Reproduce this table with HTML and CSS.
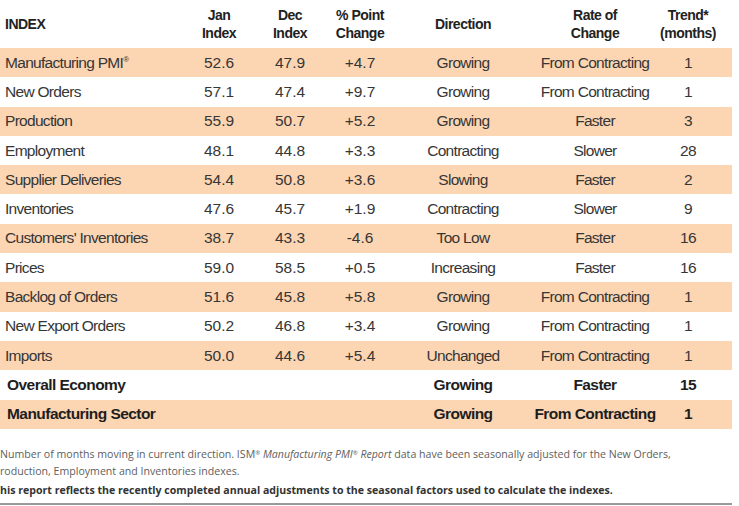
FILE: index.html
```html
<!DOCTYPE html>
<html lang="en">
<head>
<meta charset="utf-8">
<title>ISM Manufacturing Index Summary</title>
<link rel="stylesheet" href="styles.css">
</head>
<body>
<div class="page">
  <table class="ism">
    <colgroup>
      <col class="c-name"><col class="c-jan"><col class="c-dec"><col class="c-chg"><col class="c-dir"><col class="c-rate"><col class="c-trend">
    </colgroup>
    <thead>
      <tr>
        <th class="name">INDEX</th>
        <th>Jan<br>Index</th>
        <th>Dec<br>Index</th>
        <th>% Point<br>Change</th>
        <th>Direction</th>
        <th>Rate of<br>Change</th>
        <th class="trend">Trend*<br>(months)</th>
      </tr>
    </thead>
    <tbody>
      <tr class="shade"><td class="name">Manufacturing PMI<sup>®</sup></td><td class="num">52.6</td><td class="num">47.9</td><td class="num">+4.7</td><td>Growing</td><td>From Contracting</td><td class="trend">1</td></tr>
      <tr><td class="name">New Orders</td><td class="num">57.1</td><td class="num">47.4</td><td class="num">+9.7</td><td>Growing</td><td>From Contracting</td><td class="trend">1</td></tr>
      <tr class="shade"><td class="name">Production</td><td class="num">55.9</td><td class="num">50.7</td><td class="num">+5.2</td><td>Growing</td><td>Faster</td><td class="trend">3</td></tr>
      <tr><td class="name">Employment</td><td class="num">48.1</td><td class="num">44.8</td><td class="num">+3.3</td><td>Contracting</td><td>Slower</td><td class="trend">28</td></tr>
      <tr class="shade"><td class="name">Supplier Deliveries</td><td class="num">54.4</td><td class="num">50.8</td><td class="num">+3.6</td><td>Slowing</td><td>Faster</td><td class="trend">2</td></tr>
      <tr><td class="name">Inventories</td><td class="num">47.6</td><td class="num">45.7</td><td class="num">+1.9</td><td>Contracting</td><td>Slower</td><td class="trend">9</td></tr>
      <tr class="shade"><td class="name">Customers' Inventories</td><td class="num">38.7</td><td class="num">43.3</td><td class="num">-4.6</td><td>Too Low</td><td>Faster</td><td class="trend">16</td></tr>
      <tr><td class="name">Prices</td><td class="num">59.0</td><td class="num">58.5</td><td class="num">+0.5</td><td>Increasing</td><td>Faster</td><td class="trend">16</td></tr>
      <tr class="shade"><td class="name">Backlog of Orders</td><td class="num">51.6</td><td class="num">45.8</td><td class="num">+5.8</td><td>Growing</td><td>From Contracting</td><td class="trend">1</td></tr>
      <tr><td class="name">New Export Orders</td><td class="num">50.2</td><td class="num">46.8</td><td class="num">+3.4</td><td>Growing</td><td>From Contracting</td><td class="trend">1</td></tr>
      <tr class="shade"><td class="name">Imports</td><td class="num">50.0</td><td class="num">44.6</td><td class="num">+5.4</td><td>Unchanged</td><td>From Contracting</td><td class="trend">1</td></tr>
      <tr class="summary"><td class="name">Overall Economy</td><td></td><td></td><td></td><td>Growing</td><td>Faster</td><td class="trend">15</td></tr>
      <tr class="summary shade"><td class="name">Manufacturing Sector</td><td></td><td></td><td></td><td>Growing</td><td>From Contracting</td><td class="trend">1</td></tr>
    </tbody>
  </table>
  <div class="notes">
    <p class="note">Number of months moving in current direction. ISM<sup>®</sup> <em>Manufacturing PMI<sup>®</sup> Report</em> data have been seasonally adjusted for the New Orders,<br>roduction, Employment and Inventories indexes.</p>
    <p class="note strong">his report reflects the recently completed annual adjustments to the seasonal factors used to calculate the indexes.</p>
  </div>
  <div class="rule"></div>
</div>
</body>
</html>
```
FILE: styles.css
```css
html, body {
  margin: 0;
  padding: 0;
  background: #ffffff;
}

.page {
  width: 739px;
  height: 506px;
  overflow: hidden;
}

.ism {
  width: 732px;
  border-collapse: collapse;
  table-layout: fixed;
  font-family: "Liberation Sans", Arial, sans-serif;
  color: #363636;
}

.c-name { width: 184px; }
.c-jan { width: 70px; }
.c-dec { width: 72px; }
.c-chg { width: 68px; }
.c-dir { width: 138px; }
.c-rate { width: 126px; }
.c-trend { width: 74px; }

.ism th {
  height: 48px;
  padding: 0;
  font-size: 14px;
  line-height: 18px;
  letter-spacing: -0.5px;
  font-weight: bold;
  color: #222222;
  text-align: center;
  vertical-align: middle;
}

.ism td {
  height: 29.3px;
  padding: 0;
  font-size: 15.5px;
  line-height: 18px;
  letter-spacing: -0.7px;
  text-align: center;
  vertical-align: middle;
  white-space: nowrap;
}

.ism .name {
  text-align: left;
  padding-left: 5px;
}

.ism .trend {
  padding-right: 14px;
}

.ism td.num {
  letter-spacing: 0;
}

.ism tr.shade td {
  background: #fcd5b2;
}

.ism sup {
  font-size: 8px;
  line-height: 0;
  letter-spacing: 0;
  vertical-align: 6px;
}

.ism tr.summary td {
  font-weight: bold;
  font-size: 15.5px;
  letter-spacing: -0.55px;
  color: #1e1e1e;
}

.ism tr.summary td.name {
  padding-left: 7px;
}

.notes {
  margin-top: 17px;
  font-family: "Open Sans", "Lato", sans-serif;
  font-size: 10.6px;
  color: #606060;
}

.note {
  margin: 0;
  line-height: 17px;
  white-space: nowrap;
}

.note sup {
  font-size: 6px;
  line-height: 0;
  vertical-align: 3px;
}

.note.strong {
  margin-top: 2px;
  font-weight: bold;
  color: #333333;
}

.rule {
  width: 732px;
  height: 2px;
  margin-top: 4px;
  background: #9a9a9a;
}
```
